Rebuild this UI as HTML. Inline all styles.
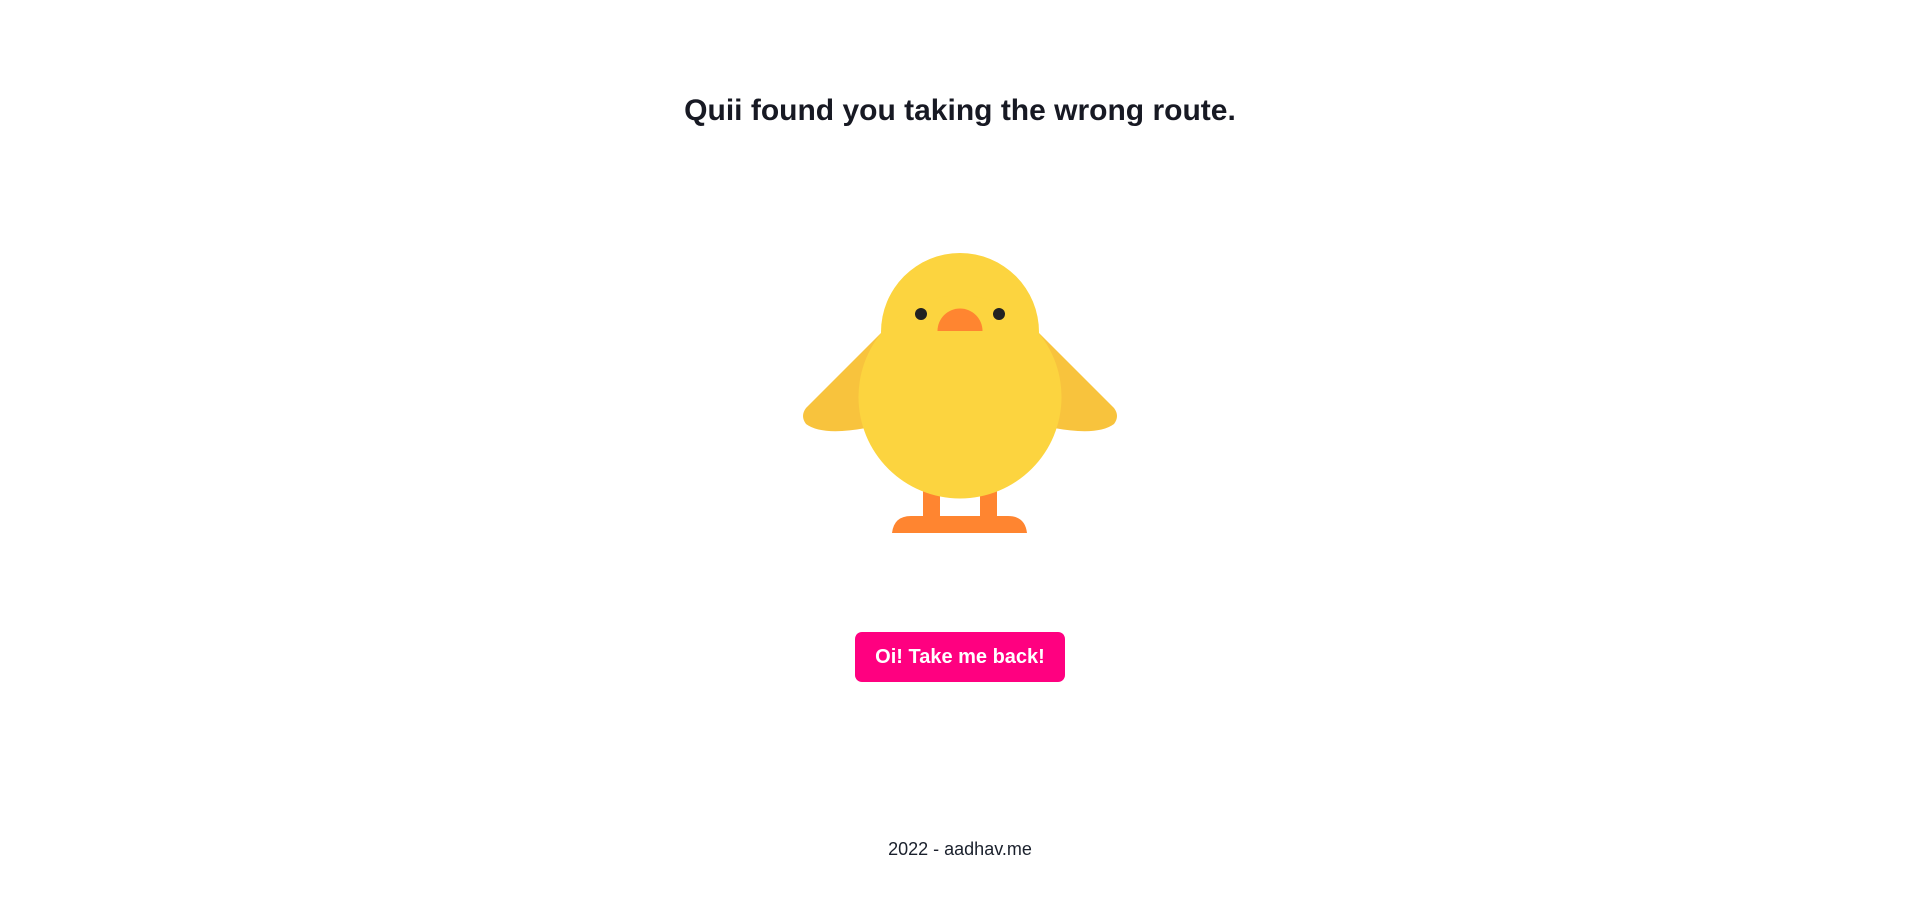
<!DOCTYPE html>
<html><head><meta charset="utf-8"><style>
html,body{margin:0;padding:0;background:#fff;width:1920px;height:906px;overflow:hidden;font-family:"Liberation Sans",sans-serif;color:#1a202c}
h1{position:absolute;left:0;width:1920px;top:91px;margin:0;text-align:center;font-size:30px;font-weight:bold;line-height:40px;color:#171923}
svg{position:absolute;left:0;top:0}
.btn{position:absolute;left:855px;top:632px;width:210px;height:50px;background:#ff0080;border-radius:7px;color:#fff;font-weight:bold;font-size:20px;line-height:50px;text-align:center}
.foot{position:absolute;left:0;width:1920px;top:837px;text-align:center;font-size:18px;line-height:24px;color:#1a202c}
</style></head><body>
<h1>Quii found you taking the wrong route.</h1>
<svg width="1920" height="906" viewBox="0 0 1920 906">
<path d="M884 330 L806 408 Q800 416 806 424 Q822 436 866 428 L900 420 Z" fill="#f8c33d"/>
<path d="M1036 330 L1114 408 Q1120 416 1114 424 Q1098 436 1054 428 L1020 420 Z" fill="#f8c33d"/>
<rect x="923" y="480" width="17" height="40" fill="#ff8530"/>
<rect x="980" y="480" width="17" height="40" fill="#ff8530"/>
<path d="M892 533 Q894 516 911 516 L1008 516 Q1025 516 1027 533 Z" fill="#ff8530"/>
<circle cx="960" cy="332" r="79" fill="#fcd43f"/>
<circle cx="960" cy="397" r="101.5" fill="#fcd43f"/>
<circle cx="921" cy="314" r="6" fill="#222"/>
<circle cx="999" cy="314" r="6" fill="#222"/>
<path d="M937.5 331 A22.5 22.5 0 0 1 982.5 331 Z" fill="#ff8530"/>
</svg>
<div class="btn">Oi! Take me back!</div>
<div class="foot">2022 - aadhav.me</div>
</body></html>
